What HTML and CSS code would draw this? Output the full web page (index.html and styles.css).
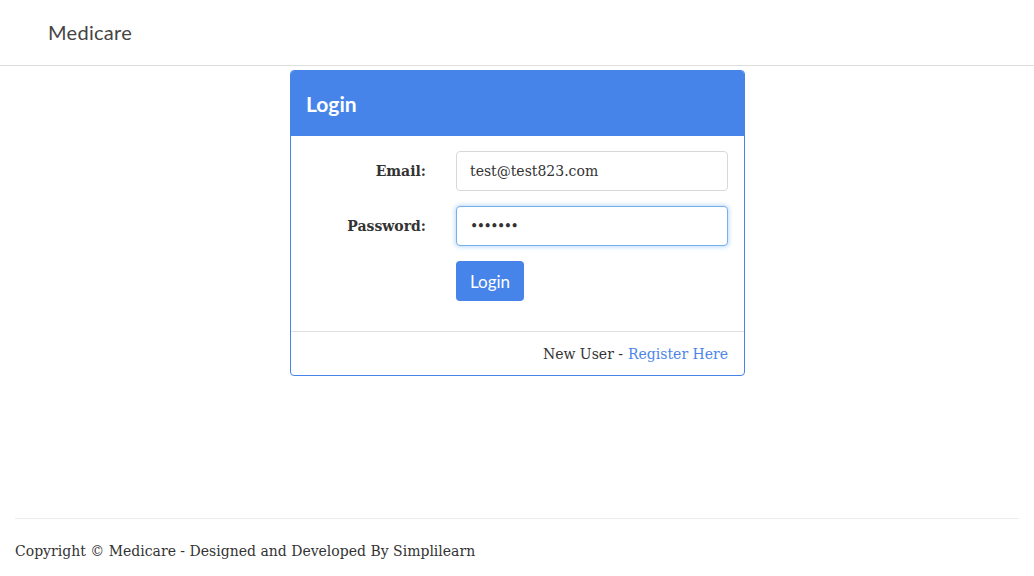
FILE: index.html
```html
<!DOCTYPE html>
<html>
<head>
<meta charset="utf-8">
<title>Medicare</title>
<link rel="stylesheet" href="styles.css">
</head>
<body>
<header class="topbar">
  <span class="brand">Medicare</span>
</header>
<main class="main">
  <section class="card">
    <div class="card-header">Login</div>
    <form class="card-body">
      <label class="label" for="email">Email:</label>
      <input class="field" id="email" type="text" value="test@test823.com">
      <label class="label" for="pw">Password:</label>
      <input class="field focused" id="pw" type="password" value="1234567">
      <span></span>
      <div><button type="button" class="btn">Login</button></div>
    </form>
    <div class="card-footer">New User - <a class="link" href="#">Register Here</a></div>
  </section>
</main>
<footer class="footer">
  <hr class="rule">
  <p class="copy">Copyright © Medicare - Designed and Developed By Simplilearn</p>
</footer>
</body>
</html>
```
FILE: styles.css
```css
html, body {
  margin: 0;
  padding: 0;
  background: #fff;
  color: #333;
  font-family: "DejaVu Serif", Georgia, serif;
  font-size: 14px;
}
.topbar {
  height: 65px;
  border-bottom: 1px solid #dedede;
  display: flex;
  align-items: center;
  padding-left: 48px;
  box-sizing: border-box;
  height: 66px;
}
.brand {
  font-family: "Lato", "Open Sans", sans-serif;
  font-size: 20px;
  color: #444;
  letter-spacing: 0.3px;
  margin-top: -2px;
}
.main {
  height: 448px;
  padding-top: 4px;
  display: flex;
  justify-content: center;
  align-items: flex-start;
}
.card {
  width: 453px;
  border: 1px solid #4684ea;
  border-radius: 4px;
  overflow: hidden;
  margin-left: 1px;
}
.card-header {
  background: #4684ea;
  color: #fff;
  height: 65px;
  display: flex;
  align-items: center;
  padding-left: 15px;
  font-family: "Lato", "Open Sans", sans-serif;
  font-weight: 700;
  font-size: 21px;
}
.card-body {
  display: grid;
  grid-template-columns: 119px 272px;
  column-gap: 30px;
  row-gap: 15px;
  padding: 15px 16px 30px 16px;
  align-items: center;
}
.label {
  text-align: right;
  font-weight: 700;
  font-size: 14px;
  color: #333;
}
.field {
  box-sizing: border-box;
  height: 40px;
  width: 272px;
  border: 1px solid #d8d8d8;
  border-radius: 4px;
  padding: 0 13px;
  font-family: "DejaVu Serif", Georgia, serif;
  font-size: 14px;
  color: #333;
  outline: none;
}
.focused {
  border-color: #74b0f0;
  box-shadow: 0 0 4px 1px rgba(102, 170, 240, 0.45);
  letter-spacing: -1.5px;
}
.btn {
  height: 40px;
  width: 68px;
  border: none;
  border-radius: 4px;
  background: #4684ea;
  color: #fff;
  font-family: "Lato", "Open Sans", sans-serif;
  font-size: 17px;
  padding: 0;
}
.card-footer {
  border-top: 1px solid #dfdfdf;
  height: 43px;
  display: flex;
  align-items: center;
  justify-content: flex-end;
  padding-right: 16px;
  font-size: 14px;
}
.link {
  color: #4d86ea;
  text-decoration: none;
  margin-left: 5px;
}
.footer {
  padding: 0 15px;
}
.rule {
  margin: 0;
  border: none;
  border-top: 1px solid #ececec;
}
.copy {
  margin: 0;
  padding-top: 24px;
  font-size: 14px;
  color: #333;
}
```
